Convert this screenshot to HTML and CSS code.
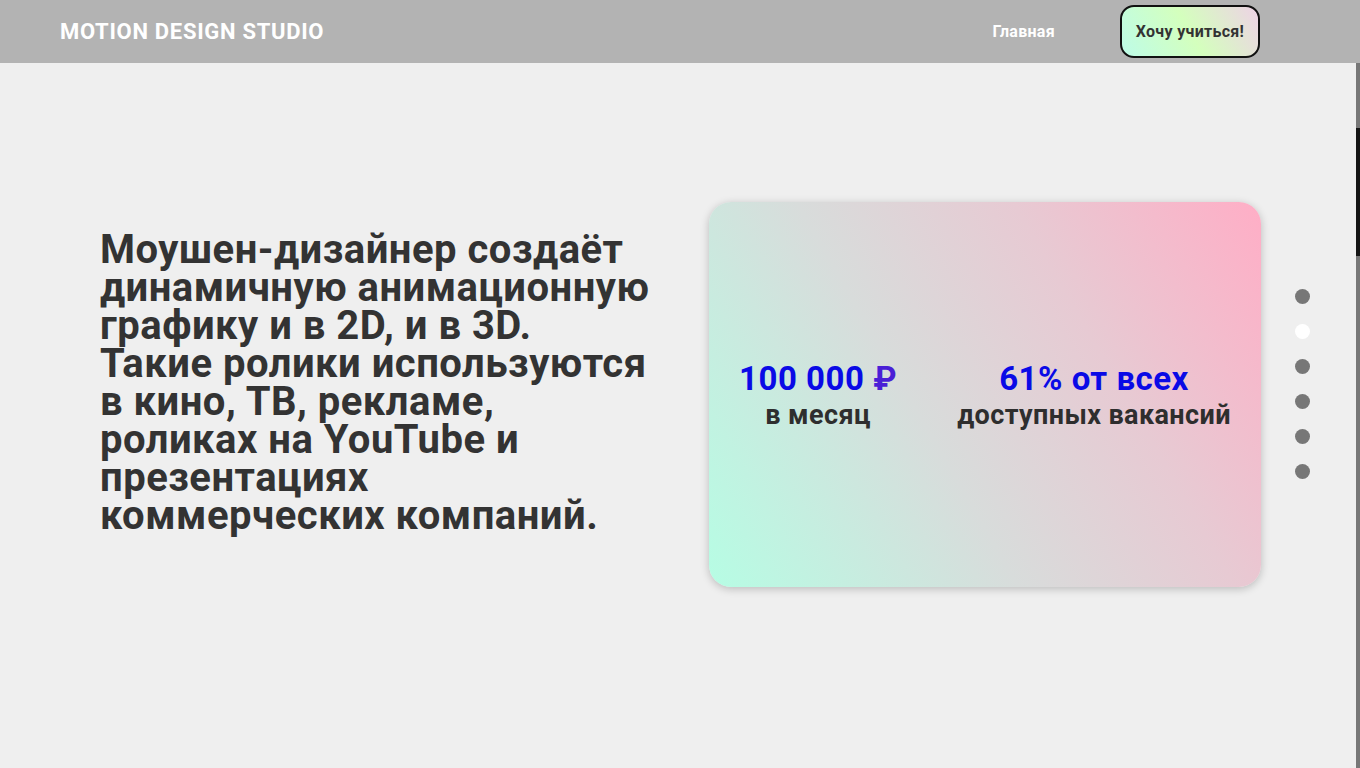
FILE: index.html
```html
<!DOCTYPE html>
<html lang="ru">
<head>
<meta charset="utf-8">
<title>Motion Design Studio</title>
<link rel="stylesheet" href="styles.css">
</head>
<body>
<header class="header">
  <div class="logo">MOTION DESIGN STUDIO</div>
  <nav class="nav">
    <a class="nav-link" href="#">Главная</a>
    <a class="cta" href="#">Хочу учиться!</a>
  </nav>
</header>
<main class="hero">
  <p class="hero-text">Моушен-дизайнер создаёт<br>динамичную анимационную<br>графику и в 2D, и в 3D.<br>Такие ролики используются<br>в кино, ТВ, рекламе,<br>роликах на YouTube и<br>презентациях<br>коммерческих компаний.</p>
  <div class="card">
    <div class="stat">
      <div class="stat-big">100 000 <span class="rub">₽</span></div>
      <div class="stat-small">в месяц</div>
    </div>
    <div class="stat">
      <div class="stat-big">61% от всех</div>
      <div class="stat-small">доступных вакансий</div>
    </div>
  </div>
  <ul class="dots">
    <li class="dot"></li>
    <li class="dot dot-active"></li>
    <li class="dot"></li>
    <li class="dot"></li>
    <li class="dot"></li>
    <li class="dot"></li>
  </ul>
</main>
<div class="scrollbar"><div class="scroll-thumb"></div></div>
</body>
</html>
```
FILE: styles.css
```css
* { box-sizing: border-box; }
html, body { margin: 0; padding: 0; }
body {
  background: #efefef;
  font-family: Roboto, "Liberation Sans", Arial, sans-serif;
  color: #333;
  height: 768px;
  overflow: hidden;
}
.header {
  height: 63px;
  background: #b3b3b3;
  display: flex;
  align-items: center;
  justify-content: space-between;
  padding: 0 100px 0 60px;
}
.logo {
  color: #fff;
  font-weight: 700;
  font-size: 22px;
  letter-spacing: 0.7px;
}
.nav {
  display: flex;
  align-items: center;
  gap: 65px;
}
.nav-link {
  color: #fff;
  font-weight: 700;
  font-size: 16px;
  letter-spacing: 0.3px;
  text-decoration: none;
}
.cta {
  display: flex;
  align-items: center;
  justify-content: center;
  width: 140px;
  height: 53px;
  border: 2px solid #111;
  border-radius: 14px;
  background: linear-gradient(60deg, #bdfce8 0%, #d4ffbd 50%, #eed2e6 100%);
  color: #333;
  font-weight: 700;
  font-size: 16px;
  letter-spacing: 0.3px;
  text-decoration: none;
}
.hero {
  display: flex;
  align-items: flex-start;
  padding: 139px 0 0 100px;
}
.hero-text {
  margin: 29px 0 0 0;
  width: 570px;
  font-size: 40px;
  line-height: 38px;
  font-weight: 700;
  letter-spacing: 0.5px;
  color: #333;
}
.card {
  margin-left: 39px;
  width: 552px;
  height: 385px;
  border-radius: 22px;
  background: linear-gradient(60deg, #b6fde4 0%, #d8dcdb 40%, #e7cad3 68%, #ffaec6 100%);
  box-shadow: 0 2px 8px rgba(0,0,0,0.22);
  display: flex;
  align-items: center;
  justify-content: space-around;
  text-align: center;
}
.stat {
  display: flex;
  flex-direction: column;
  align-items: center;
  padding-top: 4px;
}
.stat-big {
  color: #0a0ae6;
  font-weight: 700;
  font-size: 33px;
  line-height: 36px;
  letter-spacing: 0.5px;
}
.rub { color: #4a1fd6; }
.stat-small {
  color: #2e2e2e;
  font-weight: 700;
  font-size: 27px;
  line-height: 36px;
  letter-spacing: 0.4px;
}
.dots {
  list-style: none;
  margin: 87px 0 0 34px;
  padding: 0;
  display: flex;
  flex-direction: column;
  gap: 20px;
}
.dot {
  width: 15px;
  height: 15px;
  border-radius: 50%;
  background: #777;
}
.dot-active { background: #fff; }
.scrollbar {
  position: fixed;
  right: 0;
  top: 63px;
  bottom: 0;
  width: 4px;
  background: #777;
}
.scroll-thumb {
  margin-top: 65px;
  height: 128px;
  background: #141414;
}
```
